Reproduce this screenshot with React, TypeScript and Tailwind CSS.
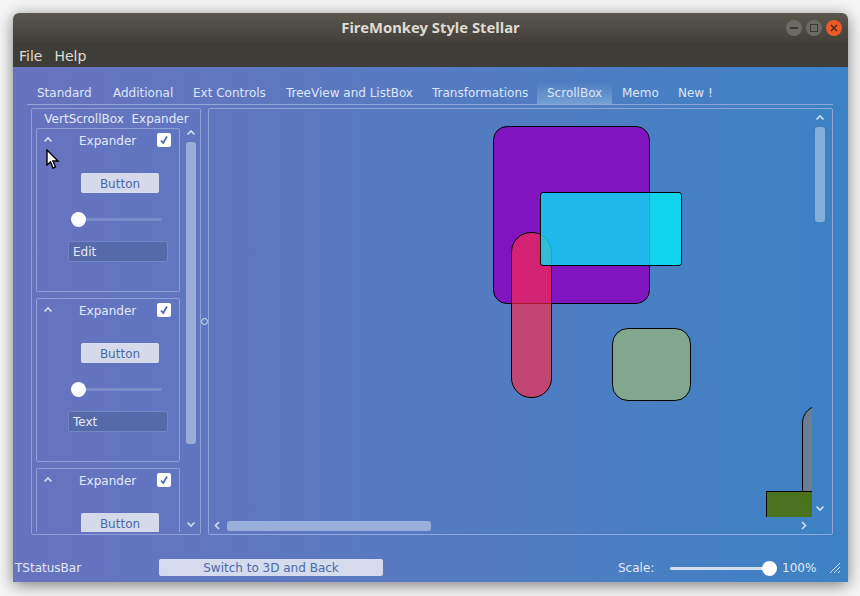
import React from 'react';

const Chevron = ({ dir = 'up' }: { dir?: 'up' | 'down' | 'left' | 'right' }) => {
  const points = {
    up: 'M1.5 5.5 L5 2 L8.5 5.5',
    down: 'M1.5 2.5 L5 6 L8.5 2.5',
    left: 'M6 1 L2.5 4.5 L6 8',
    right: 'M3 1 L6.5 4.5 L3 8',
  }[dir];
  return (
    <svg width="10" height="9" viewBox="0 0 10 9" className="block">
      <path d={points} fill="none" stroke="#d3dcf0" strokeWidth="1.7" />
    </svg>
  );
};

const Expander = ({ field }: { field: string }) => (
  <div className="h-[164px] w-[144px] shrink-0 rounded-[2px] border border-[#8e9fd6]">
    <div className="flex h-[23px] items-center">
      <div className="ml-[6px]">
        <Chevron />
      </div>
      <span className="ml-[26px] pt-[1px] text-[#e3e9f7]">Expander</span>
      <div className="ml-auto mr-[8px] -mt-[1px] flex h-[14px] w-[14px] items-center justify-center rounded-[2px] bg-white">
        <svg width="10" height="10" viewBox="0 0 10 10">
          <path d="M2 5.5 L4.2 8 L8 1.5" fill="none" stroke="#4668ad" strokeWidth="1.7" />
        </svg>
      </div>
    </div>
    <div className="ml-[44px] mt-[21px] flex h-[20px] w-[78px] items-center justify-center rounded-[2px] bg-[#d5daea] pt-[1px] text-[#4a6aa8]">
      Button
    </div>
    <div className="ml-[34px] mt-[18px] flex h-[16px] w-[91px] items-center">
      <div className="h-[15px] w-[15px] shrink-0 rounded-full bg-white" />
      <div className="h-[3px] flex-1 rounded-r-[2px] bg-[#7a8cc8]" />
    </div>
    <div className="ml-[31px] mt-[14px] flex h-[21px] w-[100px] items-center rounded-[2px] border border-[#7485c4] bg-[#5669a8] pl-[4px] pt-[1px] text-[#e3e9f7]">
      {field}
    </div>
  </div>
);

export default function App() {
  return (
    <div className="h-[596px] w-[860px] overflow-hidden bg-[#f6f6f6] pl-[13px] pt-[13px] font-['DejaVu_Sans',sans-serif]">
      <div className="relative flex h-[569px] w-[835px] flex-col overflow-hidden rounded-t-[6px] shadow-[0_3px_16px_rgba(0,0,0,0.5)]">
        {/* Title bar */}
        <div className="relative flex h-[30px] shrink-0 items-center justify-center bg-gradient-to-b from-[#5a574d] to-[#423f3a] pb-[2px]">
          <span className="font-['Noto_Sans',sans-serif] text-[14.8px] font-bold text-[#dfdbd2]">FireMonkey Style Stellar</span>
          <div className="absolute right-[6px] top-[7px] flex gap-[4px]">
            <div className="flex h-[16px] w-[16px] items-center justify-center rounded-full bg-[#6b6a64]">
              <div className="h-[1.5px] w-[8px] bg-[#3a3935]" />
            </div>
            <div className="flex h-[16px] w-[16px] items-center justify-center rounded-full bg-[#6b6a64]">
              <div className="h-[8px] w-[8px] border border-[#3a3935]" />
            </div>
            <div className="flex h-[16px] w-[16px] items-center justify-center rounded-full bg-[#e95a26]">
              <svg width="8" height="8" viewBox="0 0 8 8">
                <path d="M1 1 L7 7 M7 1 L1 7" stroke="#4a2412" strokeWidth="1.2" />
              </svg>
            </div>
          </div>
        </div>
        {/* Menu */}
        <div className="flex h-[24px] shrink-0 items-center gap-[12px] bg-[#3f3d38] pl-[6px] pt-[2px] text-[14px] text-[#dfdbd2]">
          <span>File</span>
          <span>Help</span>
        </div>

        {/* Client area */}
        <div className="relative flex flex-1 flex-col bg-gradient-to-r from-[#6872bf] to-[#3b82c4] text-[12px]">
          <div className="ml-[14px] mt-[15px] flex h-[23px] w-[806px] items-stretch border-b border-[#8ea6da] text-[#dde6f6]">
            <div className="flex w-[76px] items-center pl-[10px]">Standard</div>
            <div className="flex w-[80px] items-center pl-[10px]">Additional</div>
            <div className="flex w-[93px] items-center pl-[10px]">Ext Controls</div>
            <div className="flex w-[146px] items-center pl-[10px]">TreeView and ListBox</div>
            <div className="flex w-[115px] items-center pl-[10px]">Transformations</div>
            <div className="flex w-[75px] items-center bg-gradient-to-b from-transparent to-[#74a0d2] pl-[10px]">ScrollBox</div>
            <div className="flex w-[56px] items-center pl-[10px]">Memo</div>
            <div className="flex w-[60px] items-center pl-[10px]">New !</div>
          </div>

          <div className="ml-[18px] mt-[3px] flex h-[427px]">
            {/* Left box */}
            <div className="flex w-[170px] flex-col rounded-[2px] border border-[#8e9fd6]">
              <div className="flex h-[19px] shrink-0 items-center justify-center whitespace-pre pl-[1px] text-[#e3e9f7]">
                VertScrollBox  Expander
              </div>
              <div className="flex h-[404px]">
                <div className="ml-[4px] flex w-[144px] flex-col gap-[6px] overflow-hidden">
                  <Expander field="Edit" />
                  <Expander field="Text" />
                  <Expander field="" />
                </div>
                <div className="ml-[6px] flex w-[10px] flex-col pb-[2px]">
                  <div className="flex h-[11px] items-center justify-center">
                    <Chevron />
                  </div>
                  <div className="mt-[3px] h-[302px] rounded-[3px] bg-[#9eadd8]" />
                  <div className="mt-auto flex h-[12px] items-center justify-center">
                    <Chevron dir="down" />
                  </div>
                </div>
              </div>
            </div>

            {/* Splitter */}
            <div className="flex w-[7px] items-center justify-center pb-[1px]">
              <div className="h-[7px] w-[7px] shrink-0 rounded-full border border-[#dbe4f5] bg-[#5f78bd]" />
            </div>

            {/* Right box */}
            <div className="flex w-[625px] flex-col rounded-[2px] border border-[#8ea6da]">
              <div className="flex h-[408px]">
                <div className="relative w-[603px] overflow-hidden">
                  <div className="absolute left-[284px] top-[17px] h-[178px] w-[157px] rounded-[14px] border border-black bg-[#8015bf]" />
                  <div className="absolute left-[302px] top-[123px] h-[166px] w-[41px] rounded-[20px] border border-black bg-[rgba(255,42,70,0.65)]" />
                  <div className="absolute left-[331px] top-[83px] h-[74px] w-[142px] rounded-[3px] border border-black bg-[rgba(0,240,249,0.75)]" />
                  <div className="absolute left-[403px] top-[219px] h-[73px] w-[79px] rounded-[16px] border border-black bg-[#81a88f]" />
                  <div className="absolute left-[593px] top-[296px] h-[102px] w-[41px] rounded-[18px] border border-black bg-[#6d7d92]" />
                  <div className="absolute left-[557px] top-[382px] h-[60px] w-[90px] border border-black bg-[rgba(76,114,20,0.94)]" />
                </div>
                <div className="flex w-[20px] flex-col pl-[3px]">
                  <div className="flex h-[18px] w-[10px] items-center justify-center">
                    <Chevron />
                  </div>
                  <div className="h-[95px] w-[10px] rounded-[3px] bg-[#87aed9]" />
                  <div className="mt-auto flex h-[18px] w-[10px] items-center justify-center">
                    <Chevron dir="down" />
                  </div>
                </div>
              </div>
              <div className="flex h-[17px] items-center">
                <div className="flex w-[18px] justify-center">
                  <Chevron dir="left" />
                </div>
                <div className="h-[10px] w-[204px] rounded-[3px] bg-[#9ab0da]" />
                <div className="ml-auto mr-[19px] flex w-[18px] justify-center">
                  <Chevron dir="right" />
                </div>
              </div>
            </div>
          </div>

          {/* Status bar */}
          <div className="mt-[24px] flex h-[17px] items-center text-[#e3e9f7]">
            <span className="ml-[2px] w-[144px] pt-[1px]">TStatusBar</span>
            <div className="flex h-[17px] w-[224px] items-center justify-center rounded-[2px] bg-[#d3dbec] pt-[1px] text-[#4a6aa8]">
              Switch to 3D and Back
            </div>
            <span className="ml-[235px] w-[52px] pt-[1px]">Scale:</span>
            <div className="mt-[1px] flex h-[16px] w-[107px] items-center">
              <div className="-mr-[1px] h-[3px] flex-1 rounded-l-[2px] bg-[#d3e0f2]" />
              <div className="h-[15px] w-[15px] shrink-0 rounded-full bg-white" />
            </div>
            <span className="ml-[5px] pt-[1px]">100%</span>
          </div>

          <svg width="12" height="12" viewBox="0 0 12 12" className="absolute bottom-[8px] right-[7px]">
            <path d="M1 11 L11 1 M5 11 L11 5 M9 11 L11 9" stroke="#e3e9f7" strokeWidth="0.9" />
          </svg>
        </div>

        {/* Mouse pointer */}
        <svg width="14" height="21" viewBox="0 0 14 21" className="absolute left-[33px] top-[136px]">
          <path d="M1 1 L1 16 L4.5 13 L7 19 L9.5 18 L7 12 L12 12 Z" fill="white" stroke="black" strokeWidth="1.4" />
        </svg>
      </div>
    </div>
  );
}
